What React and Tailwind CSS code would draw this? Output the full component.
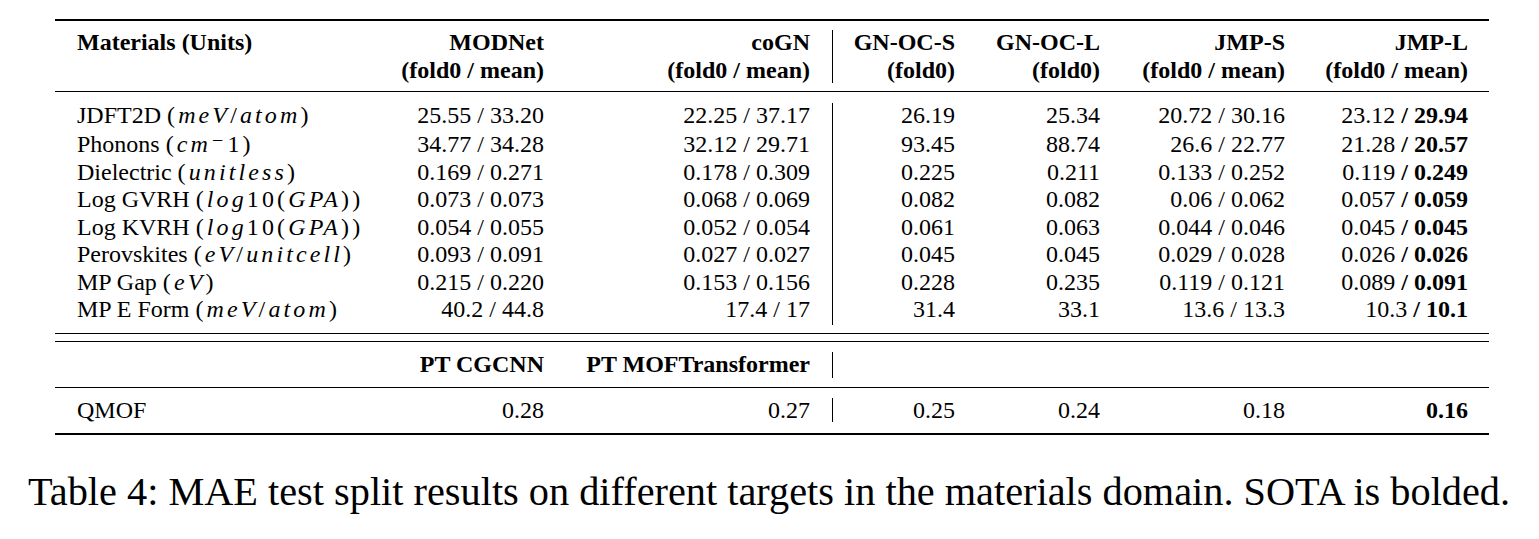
import React from "react";

const cols = "grid grid-cols-[303px_164px_266px_44px_101px_145px_185px_183px]";

// math-mode units: upright parens and digits, italic letters, wide CM-like spacing
const M = ({ children }) => <span className="tracking-[0.13em]">{children}</span>;
const I = ({ children }) => <i>{children}</i>;

const rows = [
  {
    label: (
      <>
        JDFT2D{" "}
        <M>
          (<I>meV</I>/<I>atom</I>)
        </M>
      </>
    ),
    v: ["25.55 / 33.20", "22.25 / 37.17", "26.19", "25.34", "20.72 / 30.16"],
    best: ["23.12", "29.94"],
  },
  {
    label: (
      <>
        Phonons{" "}
        <M>
          (<I>cm</I>
          <span className="text-[20px] relative -top-[5px] mx-[1px]">−</span>1)
        </M>
      </>
    ),
    v: ["34.77 / 34.28", "32.12 / 29.71", "93.45", "88.74", "26.6 / 22.77"],
    best: ["21.28", "20.57"],
  },
  {
    label: (
      <>
        Dielectric{" "}
        <M>
          (<I>unitless</I>)
        </M>
      </>
    ),
    v: ["0.169 / 0.271", "0.178 / 0.309", "0.225", "0.211", "0.133 / 0.252"],
    best: ["0.119", "0.249"],
  },
  {
    label: (
      <>
        Log GVRH{" "}
        <M>
          (<I>log</I>10(<I>GPA</I>))
        </M>
      </>
    ),
    v: ["0.073 / 0.073", "0.068 / 0.069", "0.082", "0.082", "0.06 / 0.062"],
    best: ["0.057", "0.059"],
  },
  {
    label: (
      <>
        Log KVRH{" "}
        <M>
          (<I>log</I>10(<I>GPA</I>))
        </M>
      </>
    ),
    v: ["0.054 / 0.055", "0.052 / 0.054", "0.061", "0.063", "0.044 / 0.046"],
    best: ["0.045", "0.045"],
  },
  {
    label: (
      <>
        Perovskites{" "}
        <M>
          (<I>eV</I>/<I>unitcell</I>)
        </M>
      </>
    ),
    v: ["0.093 / 0.091", "0.027 / 0.027", "0.045", "0.045", "0.029 / 0.028"],
    best: ["0.026", "0.026"],
  },
  {
    label: (
      <>
        MP Gap{" "}
        <M>
          (<I>eV</I>)
        </M>
      </>
    ),
    v: ["0.215 / 0.220", "0.153 / 0.156", "0.228", "0.235", "0.119 / 0.121"],
    best: ["0.089", "0.091"],
  },
  {
    label: (
      <>
        MP E Form{" "}
        <M>
          (<I>meV</I>/<I>atom</I>)
        </M>
      </>
    ),
    v: ["40.2 / 44.8", "17.4 / 17", "31.4", "33.1", "13.6 / 13.3"],
    best: ["10.3", "10.1"],
  },
];

const Bar = ({ span, className }) => (
  <div className={`col-start-4 row-start-1 flex justify-center ${span} ${className}`}>
    <div className="w-px bg-black h-full" />
  </div>
);

const Cell = ({ children, left }) => (
  <div className={`flex items-center whitespace-nowrap ${left ? "justify-start" : "justify-end"}`}>
    {children}
  </div>
);

export default function App() {
  return (
    <div className="bg-white min-h-screen w-[1539px] pt-[19px] text-black [font-family:Liberation_Serif,serif]">
      <div className="ml-[55px] w-[1434px] text-[24px]">
        {/* header */}
        <div className="border-t-2 border-black" />
        <div className={`${cols} grid-rows-[28px_28px] pl-[22px] pr-[21px] pt-[7px] pb-[7px] leading-[28px] font-bold`}>
          <Bar span="row-span-2" className="pt-[2px] pb-px" />
          <Cell left>Materials (Units)</Cell>
          <Cell>MODNet</Cell>
          <Cell>coGN</Cell>
          <Cell>GN-OC-S</Cell>
          <Cell>GN-OC-L</Cell>
          <Cell>JMP-S</Cell>
          <Cell>JMP-L</Cell>
          <Cell left> </Cell>
          <Cell>(fold0 / mean)</Cell>
          <Cell>(fold0 / mean)</Cell>
          <Cell>(fold0)</Cell>
          <Cell>(fold0)</Cell>
          <Cell>(fold0 / mean)</Cell>
          <Cell>(fold0 / mean)</Cell>
        </div>
        <div className="border-t border-black" />

        {/* body */}
        <div
          className={`${cols} grid-rows-[30px_28px_27px_28px_27px_28px_27px_28px] pl-[22px] pr-[21px] pt-[8px] pb-[10px]`}
        >
          <Bar span="row-span-8" className="pt-[3px] -mb-[2px]" />
          {rows.map((r, i) => (
            <React.Fragment key={i}>
              <Cell left>
                <span>{r.label}</span>
              </Cell>
              <Cell>{r.v[0]}</Cell>
              <Cell>{r.v[1]}</Cell>
              <Cell>{r.v[2]}</Cell>
              <Cell>{r.v[3]}</Cell>
              <Cell>{r.v[4]}</Cell>
              <Cell>
                {r.best[0]}&nbsp;<b>/ {r.best[1]}</b>
              </Cell>
            </React.Fragment>
          ))}
        </div>

        {/* double rule */}
        <div className="border-t border-black" />
        <div className="h-[7px]" />
        <div className="border-t border-black" />

        {/* second header */}
        <div className={`${cols} grid-rows-[28px] pl-[22px] pr-[21px] pt-[8px] pb-[9px] font-bold`}>
          <Bar span="row-span-1" className="pt-[2px]" />
          <Cell left> </Cell>
          <Cell>PT CGCNN</Cell>
          <Cell>PT MOFTransformer</Cell>
          <Cell> </Cell>
          <Cell> </Cell>
          <Cell> </Cell>
          <Cell> </Cell>
        </div>
        <div className="border-t border-black" />

        {/* qmof */}
        <div className={`${cols} grid-rows-[28px] pl-[22px] pr-[21px] pt-[8px] pb-[9px]`}>
          <Bar span="row-span-1" className="pt-[2px] pb-[2px]" />
          <Cell left>QMOF</Cell>
          <Cell>0.28</Cell>
          <Cell>0.27</Cell>
          <Cell>0.25</Cell>
          <Cell>0.24</Cell>
          <Cell>0.18</Cell>
          <Cell>
            <b>0.16</b>
          </Cell>
        </div>
        <div className="border-t-2 border-black" />
      </div>

      <p className="mt-[37px] pl-[28px] text-[40.3px] leading-[40px] whitespace-nowrap">
        Table 4: MAE test split results on different targets in the materials domain. SOTA is bolded.
      </p>
    </div>
  );
}
